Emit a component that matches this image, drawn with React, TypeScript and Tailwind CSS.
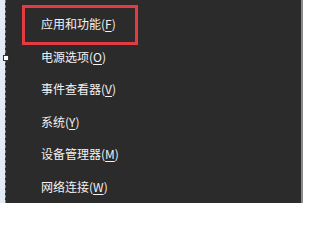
import React from "react";

const items: { label: string; key: string }[] = [
  { label: "应用和功能", key: "F" },
  { label: "电源选项", key: "O" },
  { label: "事件查看器", key: "V" },
  { label: "系统", key: "Y" },
  { label: "设备管理器", key: "M" },
  { label: "网络连接", key: "W" },
];

export default function App() {
  return (
    <div
      className="relative flex w-[303px] h-[203px] overflow-hidden bg-[#2b2b2b]"
      style={{ fontFamily: '"Noto Sans CJK SC", "Noto Sans", sans-serif' }}
    >
      <div className="w-[5px] h-full bg-[#e3ecf5]" />
      <div className="w-0 h-full border-l border-dashed border-[#5a82ad]" />
      <div className="flex-1 h-full flex flex-col pt-[8px] pl-[35px]">
        {items.map((it) => (
          <div key={it.key} className="h-[33px] flex items-center text-[12px] leading-none text-[#f2f2f2]">
            <span>{it.label}</span>
            <span>
              (<span className="underline underline-offset-2">{it.key}</span>)
            </span>
          </div>
        ))}
      </div>
      <div className="w-[2px] h-full bg-[#8a8a8a]" />
      <div className="absolute left-[22px] top-[5px] w-[116px] h-[40px] border-[3px] border-[#e33b40]" />
      <div className="absolute left-[3px] top-[55px] w-[6px] h-[6px] bg-white border border-[#333]" />
    </div>
  );
}
